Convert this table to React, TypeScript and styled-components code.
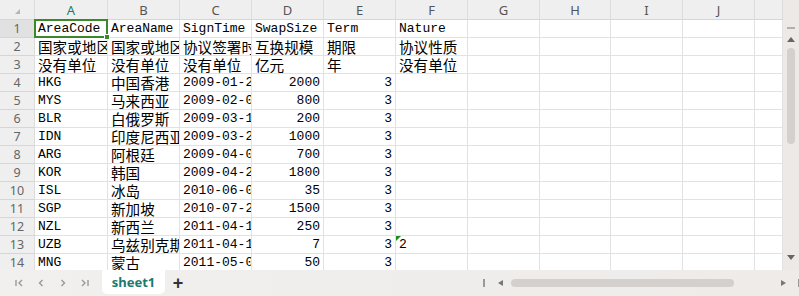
import React from "react";
import styled, { createGlobalStyle, css } from "styled-components";

const GlobalStyle = createGlobalStyle`
  body {
    margin: 0;
    background: #fff;
  }
`;

const LETTERS = ["A", "B", "C", "D", "E", "F", "G", "H", "I", "J", ""];
const WIDTHS = [73, 72, 72, 72, 72, 72, 72, 71, 72, 72, 28];

const ROWS: string[][] = [
  ["AreaCode", "AreaName", "SignTime", "SwapSize", "Term", "Nature"],
  ["国家或地区", "国家或地区", "协议签署时间", "互换规模", "期限", "协议性质"],
  ["没有单位", "没有单位", "没有单位", "亿元", "年", "没有单位"],
  ["HKG", "中国香港", "2009-01-20", "2000", "3", ""],
  ["MYS", "马来西亚", "2009-02-08", "800", "3", ""],
  ["BLR", "白俄罗斯", "2009-03-11", "200", "3", ""],
  ["IDN", "印度尼西亚", "2009-03-23", "1000", "3", ""],
  ["ARG", "阿根廷", "2009-04-02", "700", "3", ""],
  ["KOR", "韩国", "2009-04-20", "1800", "3", ""],
  ["ISL", "冰岛", "2010-06-09", "35", "3", ""],
  ["SGP", "新加坡", "2010-07-23", "1500", "3", ""],
  ["NZL", "新西兰", "2011-04-18", "250", "3", ""],
  ["UZB", "乌兹别克斯坦", "2011-04-19", "7", "3", "2"],
  ["MNG", "蒙古", "2011-05-06", "50", "3", ""],
];

const isCjk = (s: string) => /[\u4e00-\u9fff]/.test(s);

const Page = styled.div`
  width: 799px;
  height: 296px;
  display: flex;
  flex-direction: column;
  overflow: hidden;
`;

const SheetArea = styled.div`
  height: 270px;
  display: flex;
`;

const Grid = styled.div`
  flex: 1;
  display: grid;
  grid-template-columns: 35px ${WIDTHS.map((w) => `${w}px`).join(" ")};
  grid-template-rows: 20px;
  grid-auto-rows: 18px;
  overflow: hidden;
`;

const HeadCell = styled.div<{ $active?: boolean; $selected?: boolean }>`
  box-sizing: border-box;
  background: ${(p) => (p.$selected ? "#e1e1e1" : "#efefef")};
  border-right: 1px solid #dcdcdc;
  border-bottom: 1px solid #d6d6d6;
  display: flex;
  align-items: center;
  justify-content: center;
  font-family: "Noto Sans", "Liberation Sans", sans-serif;
  font-size: 13px;
  color: ${(p) => (p.$active ? "#1b7f64" : "#555")};
`;

const Corner = styled(HeadCell)`
  position: relative;
  &::after {
    content: "";
    position: absolute;
    left: 15px;
    top: 9px;
    border-style: solid;
    border-width: 0 0 5px 5px;
    border-color: transparent transparent #b4b4b4 transparent;
  }
`;

const RowHead = styled(HeadCell)`
  color: #666;
  font-size: 12.5px;
`;

const Cell = styled.div<{
  $right?: boolean;
  $cjk?: boolean;
  $selected?: boolean;
  $flag?: boolean;
}>`
  box-sizing: border-box;
  position: relative;
  border-right: 1px solid #e2e2e2;
  border-bottom: 1px solid #e2e2e2;
  padding: 0 3px;
  white-space: nowrap;
  overflow: ${(p) => (p.$selected ? "visible" : "hidden")};
  display: flex;
  align-items: center;
  justify-content: ${(p) => (p.$right ? "flex-end" : "flex-start")};
  font-family: "Liberation Mono", "Noto Sans CJK SC", monospace;
  font-size: ${(p) => (p.$cjk ? "14.6px" : "13px")};
  color: #000;

  ${(p) =>
    p.$selected &&
    css`
      &::after {
        content: "";
        position: absolute;
        left: -1px;
        top: -1px;
        right: -1px;
        bottom: -1px;
        border: 2px solid #3a8a2c;
        pointer-events: none;
      }
      &::before {
        content: "";
        position: absolute;
        right: -3px;
        bottom: -3px;
        width: 4px;
        height: 4px;
        background: #3a8a2c;
        border: 1px solid #fff;
        z-index: 2;
      }
    `}

  ${(p) =>
    p.$flag &&
    css`
      &::before {
        content: "";
        position: absolute;
        left: 0;
        top: 0;
        border-style: solid;
        border-width: 5px 5px 0 0;
        border-color: #1f8a1f transparent transparent transparent;
      }
    `}
`;

const VScroll = styled.div`
  width: 16px;
  background: #ece9e7;
  display: flex;
  flex-direction: column;
  align-items: center;
  padding-top: 27px;
  box-sizing: border-box;
  position: relative;
`;

const Dash = styled.div`
  width: 8px;
  height: 2px;
  margin-bottom: 8px;
  background: #b3b0ae;
`;

const Tri = styled.div<{ $dir: "up" | "down" | "left" | "right" }>`
  width: 0;
  height: 0;
  border-style: solid;
  ${(p) =>
    p.$dir === "up"
      ? css`
          border-width: 0 4px 5px 4px;
          border-color: transparent transparent #666 transparent;
        `
      : p.$dir === "down"
      ? css`
          border-width: 5px 4px 0 4px;
          border-color: #666 transparent transparent transparent;
        `
      : p.$dir === "left"
      ? css`
          border-width: 3.5px 5px 3.5px 0;
          border-color: transparent #777 transparent transparent;
        `
      : css`
          border-width: 3.5px 0 3.5px 5px;
          border-color: transparent transparent transparent #777;
        `}
`;

const VThumb = styled.div`
  width: 8px;
  height: 96px;
  border-radius: 4px;
  background: #d4d0ce;
  margin-top: 6px;
`;

const VDown = styled.div`
  position: absolute;
  bottom: 10px;
  left: 4px;
`;

const BottomBar = styled.div`
  height: 26px;
  background: linear-gradient(90deg, #f2f0ef 0%, #f0eeec 40%, #eeebe9 100%);
  display: flex;
  align-items: stretch;
`;

const Nav = styled.div`
  display: flex;
  align-items: center;
  gap: 12px;
  padding-left: 14px;
  width: 88px;
`;

const Tab = styled.div`
  width: 63px;
  height: 24px;
  background: #fff;
  border-radius: 0 0 5px 5px;
  display: flex;
  align-items: center;
  justify-content: center;
  font-family: "Noto Sans", "Liberation Sans", sans-serif;
  font-weight: 700;
  font-size: 13px;
  color: #1a7a72;
`;

const Plus = styled.div`
  width: 26px;
  display: flex;
  align-items: center;
  justify-content: center;
  font-family: "Liberation Sans", sans-serif;
  font-weight: 700;
  font-size: 18px;
  color: #333;
  padding-top: 1px;
`;

const HScroll = styled.div`
  margin-left: auto;
  width: 339px;
  display: flex;
  align-items: center;
  padding-left: 4px;
  box-sizing: border-box;
`;

const Bar = styled.div<{ $gap: number }>`
  width: 1.5px;
  height: 8px;
  background: #999;
  margin-left: ${(p) => p.$gap}px;
`;

const HThumb = styled.div`
  width: 223px;
  height: 8px;
  border-radius: 4px;
  background: #d4d0ce;
  margin-left: 8px;
`;

const Gap = styled.div<{ $w: number }>`
  width: ${(p) => p.$w}px;
`;

const Chevron: React.FC<{ d: string }> = ({ d }) => (
  <svg width="10" height="10" viewBox="0 0 10 10">
    <path d={d} fill="none" stroke="#999" strokeWidth="1.4" />
  </svg>
);

const App: React.FC = () => {
  return (
    <Page>
      <GlobalStyle />
      <SheetArea>
        <Grid>
          <Corner />
          {LETTERS.map((l, i) => (
            <HeadCell key={i} $active={l === "A"}>
              {l}
            </HeadCell>
          ))}
          {ROWS.map((row, r) => (
            <React.Fragment key={r}>
              <RowHead $selected={r === 0}>{r + 1}</RowHead>
              {LETTERS.map((_, c) => {
                const text = row[c] ?? "";
                return (
                  <Cell
                    key={c}
                    $right={r >= 3 && (c === 3 || c === 4)}
                    $cjk={isCjk(text)}
                    $selected={r === 0 && c === 0}
                    $flag={r === 12 && c === 5}
                  >
                    {text}
                  </Cell>
                );
              })}
            </React.Fragment>
          ))}
        </Grid>
        <VScroll>
          <Dash />
          <Tri $dir="up" />
          <VThumb />
          <VDown>
            <Tri $dir="down" />
          </VDown>
        </VScroll>
      </SheetArea>
      <BottomBar>
        <Nav>
          <Chevron d="M2 2 V8 M8 2 L5 5 L8 8" />
          <Chevron d="M6.5 2 L3.5 5 L6.5 8" />
          <Chevron d="M3.5 2 L6.5 5 L3.5 8" />
          <Chevron d="M2 2 L5 5 L2 8 M8 2 V8" />
        </Nav>
        <Tab>sheet1</Tab>
        <Plus>+</Plus>
        <HScroll>
          <Bar $gap={19} />
          <Gap $w={14} />
          <Tri $dir="left" />
          <HThumb />
          <Gap $w={47} />
          <Tri $dir="right" />
          <Bar $gap={12} />
        </HScroll>
      </BottomBar>
    </Page>
  );
};

export default App;
